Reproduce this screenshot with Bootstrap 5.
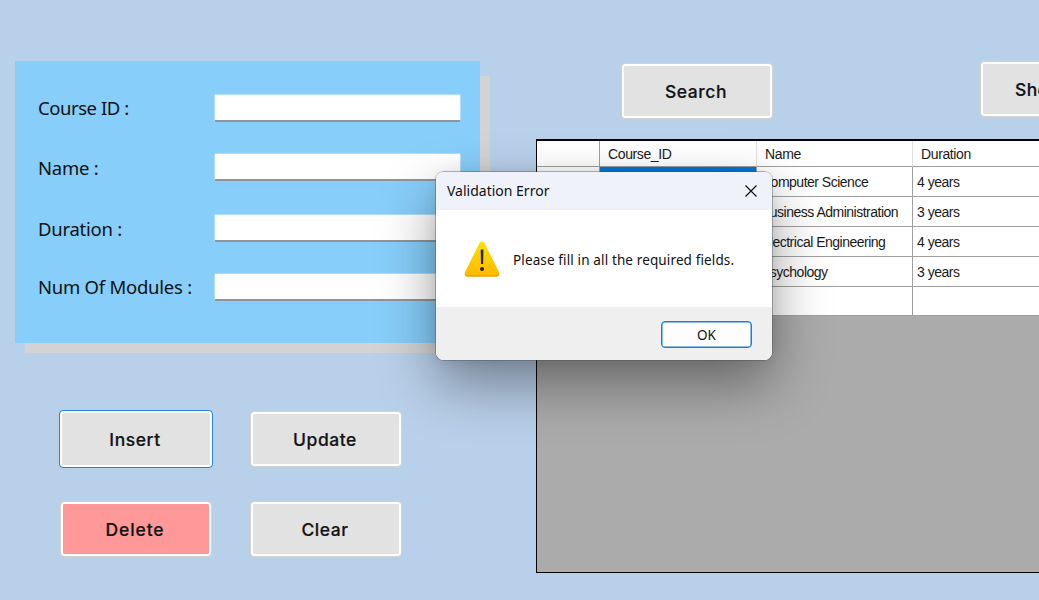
<!DOCTYPE html>
<html lang="en">
<head>
<meta charset="utf-8">
<title>Courses</title>
<link href="https://cdn.jsdelivr.net/npm/bootstrap@5.3.0/dist/css/bootstrap.min.css" rel="stylesheet">
<style>
body{width:1039px;height:600px;background:#b9d0ea;color:#111;font-family:"Noto Sans",sans-serif;overflow:hidden}
.left-pane{width:536px;padding:61px 0 0 15px}
.form-panel{width:465px;height:282px;background:#87cefa;position:relative;padding:33px 19px 0 23px;z-index:0}
.shade{position:absolute;left:10px;top:15px;right:-10px;bottom:-10px;background:#d3d3d3;z-index:-2}
.form-panel::before{content:"";position:absolute;inset:0;background:#87cefa;z-index:-1}
.field-label{width:176px;font-size:18.5px;line-height:28px;white-space:nowrap;letter-spacing:-.25px;padding-top:1px}
.field-label.tight{letter-spacing:-.45px;padding-top:0}
.form-control.field{width:247px;height:28px;border:1px solid #b5dcf5;border-bottom:2px solid #8e9499;border-radius:2px;padding:0 4px;background:#fff}
.field-row{height:28px}
.btn.tool{width:152px;height:56px;border:1px solid #d5d2ce;border-radius:4px;background:#e2e2e2;box-shadow:inset 0 0 0 2px #fff;color:#141414;font:500 17.5px/52px Inter,sans-serif;letter-spacing:.55px;padding:2px 2px 0 0;-webkit-text-stroke:.2px #141414}
.btn.tool.focused{width:154px;height:58px;border-color:#2486d8;margin:-1px;line-height:54px}
.btn.tool.danger{background:#ff9999;letter-spacing:.9px}
.actions{display:grid;grid-template-columns:152px 152px;gap:34px 38px;margin:68px 0 0 45px}
.right-pane{width:503px;overflow:hidden;padding-top:61px}
.data-frame{width:660px;height:434px;background:#ababab;border:1px solid #000;border-top-width:2px;margin-top:20px;flex:none}
.data-frame table{table-layout:fixed;width:532px;border-collapse:separate;border-spacing:0;font:14px/16px "Liberation Sans",sans-serif;letter-spacing:-.5px;color:#1b1b1b;margin:0}
.data-frame td,.data-frame th{height:30px;padding:0 0 0 4px;border-right:1px solid #a0a0a0;border-bottom:1px solid #a0a0a0;background:#fff;font-weight:400;white-space:nowrap;vertical-align:middle}
.data-frame th{height:26px;padding:1px 0 0 8px;border-right-color:#e0e0e0;letter-spacing:-.38px}
.data-frame tr:last-child td{height:29px}
.data-frame th:first-child{border-right-color:#a0a0a0}
.data-frame td.picked{background:#0078d7;color:#fff}
.msgbox{position:absolute;left:436px;top:172px;width:336px;height:188px;border-radius:8px;overflow:hidden;background:#fff}
.msg-shadow{position:absolute;left:436px;top:172px;width:336px;height:188px;border-radius:8px;box-shadow:0 0 0 1px rgba(70,80,90,.4),0 24px 56px rgba(0,0,0,.4),0 0 14px rgba(0,0,0,.08)}
.msg-title{height:38px;background:#eff2fa;padding:0 15px 0 11px;font-size:14px;color:#111}
.t-title{position:relative;top:-1px}
.msg-body{height:97px;padding-left:28px;font-size:13.5px;color:#111}
.t-msg{margin:4px 0 0 13px;letter-spacing:.13px}
.msg-foot{height:53px;background:#efefef;padding:1px 20px 0 0}
.btn.ok{width:91px;height:27px;border:1px solid #1b7fd1;box-shadow:inset 0 0 0 .5px #1b7fd1;border-radius:4px;background:#fdfdfd;font:13.5px/26px "Noto Sans",sans-serif;padding:0;color:#111}
</style>
</head>
<body class="d-flex position-relative">
<main class="left-pane flex-shrink-0">
  <form class="form-panel">
    <div class="shade"></div>
    <div class="field-row d-flex"><label class="field-label tight" for="cid">Course ID :</label><input id="cid" class="form-control field"></div>
    <div class="field-row d-flex" style="margin-top:31px"><label class="field-label" for="nm">Name :</label><input id="nm" class="form-control field"></div>
    <div class="field-row d-flex" style="margin-top:33px"><label class="field-label" for="du">Duration :</label><input id="du" class="form-control field"></div>
    <div class="field-row d-flex" style="margin-top:31px"><label class="field-label pt-0" for="mo">Num Of Modules :</label><input id="mo" class="form-control field"></div>
  </form>
  <div class="actions">
    <button class="btn tool focused">Insert</button>
    <button class="btn tool">Update</button>
    <button class="btn tool danger">Delete</button>
    <button class="btn tool">Clear</button>
  </div>
</main>
<section class="right-pane">
  <div class="d-flex" style="padding-left:85px">
    <button class="btn tool flex-shrink-0" style="margin-top:2px">Search</button>
    <button class="btn tool flex-shrink-0" style="margin-left:207px;letter-spacing:.3px;padding-right:7px">Show All</button>
  </div>
  <div class="data-frame">
    <table>
      <colgroup><col style="width:63px"><col style="width:157px"><col style="width:156px"><col style="width:156px"></colgroup>
      <thead><tr><th></th><th>Course_ID</th><th>Name</th><th>Duration</th></tr></thead>
      <tbody>
        <tr><td></td><td class="picked"></td><td>Computer Science</td><td>4 years</td></tr>
        <tr><td></td><td></td><td>Business Administration</td><td>3 years</td></tr>
        <tr><td></td><td></td><td>Electrical Engineering</td><td>4 years</td></tr>
        <tr><td></td><td></td><td>Psychology</td><td>3 years</td></tr>
        <tr><td></td><td></td><td></td><td></td></tr>
      </tbody>
    </table>
  </div>
</section>
<div class="msg-shadow"></div>
<div class="msgbox" role="dialog" aria-label="Validation Error">
  <div class="msg-title d-flex align-items-center justify-content-between"><span class="t-title">Validation Error</span>
    <svg width="12" height="12" viewBox="0 0 12 12" stroke="#111" stroke-width="1.2" fill="none"><path d="M.5.5l11 11M11.5.5l-11 11"/></svg></div>
  <div class="msg-body d-flex align-items-center">
    <svg width="36" height="36" viewBox="0 0 36 36"><defs><linearGradient id="warn" x1="0" y1="0" x2="0" y2="1"><stop offset="0" stop-color="#ffe000"/><stop offset="1" stop-color="#ffb900"/></linearGradient></defs>
      <path d="M15.600 1.700Q18-.8 20.400 1.700L35.200 31.600Q36.200 35 33 35.400H3Q-.2 35 .8 31.600Z" fill="url(#warn)"/><path d="M1 33.200Q1.500 35.600 3 35.500H33Q34.500 35.600 35 33.200Q34 34.500 33 34.500H3Q2 34.500 1 33.200Z" fill="#dc9500"/>
      <path d="M16.700 8.500h2.700l-.3 14.500h-2.100z" fill="#222"/><circle cx="18" cy="28" r="2" fill="#222"/></svg>
    <span class="t-msg">Please fill in all the required fields.</span>
  </div>
  <div class="msg-foot d-flex align-items-center justify-content-end"><button class="btn ok">OK</button></div>
</div>
<script src="https://cdn.jsdelivr.net/npm/bootstrap@5.3.0/dist/js/bootstrap.bundle.min.js"></script>
</body>
</html>
